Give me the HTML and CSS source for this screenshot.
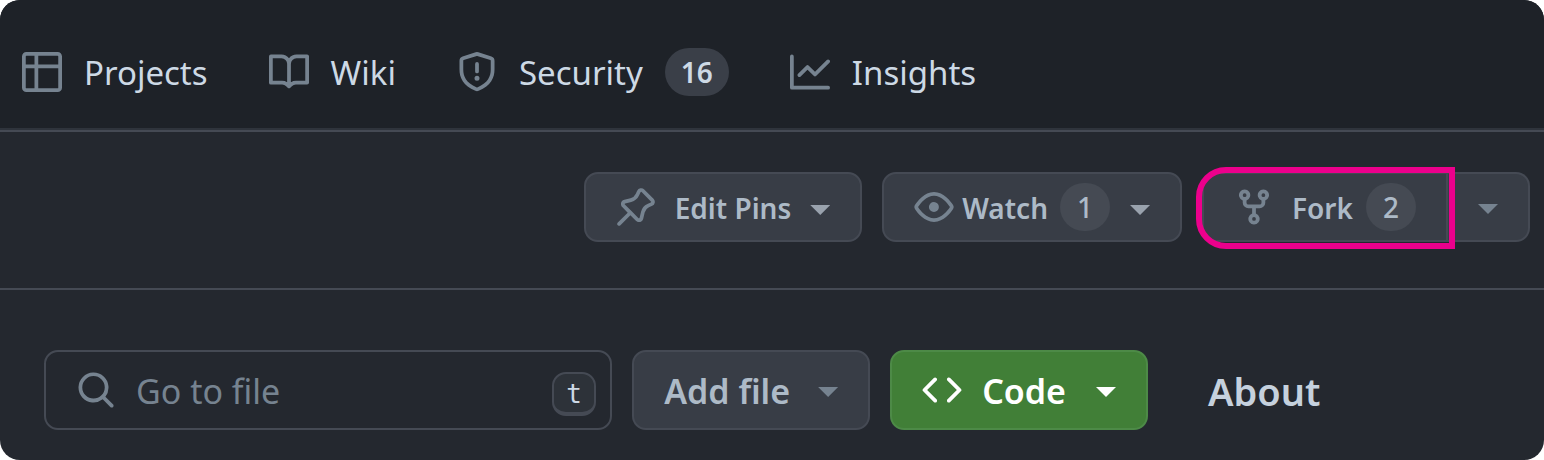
FILE: index.html
```html
<!DOCTYPE html>
<html lang="en">
<head>
<meta charset="utf-8">
<title>Repository</title>
<meta name="viewport" content="width=device-width, initial-scale=1">
<link rel="stylesheet" href="styles.css">
</head>
<body>
<div class="window">
  <nav class="tabs" aria-label="Repository">
    <a class="tab" href="#projects">
      <svg class="icon" viewBox="0 0 16 16" aria-hidden="true"><path d="M0 1.75C0 .784.784 0 1.75 0h12.5C15.216 0 16 .784 16 1.75v12.5A1.75 1.75 0 0 1 14.25 16H1.75A1.75 1.75 0 0 1 0 14.25ZM6.5 6.5v8h7.75a.25.25 0 0 0 .25-.25V6.5Zm8-1.5V1.75a.25.25 0 0 0-.25-.25H6.5V5Zm-13 1.5v7.75c0 .138.112.25.25.25H5v-8ZM5 5V1.5H1.75a.25.25 0 0 0-.25.25V5Z"/></svg>
      <span class="label">Projects</span>
    </a>
    <a class="tab" href="#wiki">
      <svg class="icon" viewBox="0 0 16 16" aria-hidden="true"><path d="M0 1.75A.75.75 0 0 1 .75 1h4.253c1.227 0 2.317.59 3 1.501A3.743 3.743 0 0 1 11.006 1h4.245a.75.75 0 0 1 .75.75v10.5a.75.75 0 0 1-.75.75h-4.507a2.25 2.25 0 0 0-1.591.659l-.622.621a.75.75 0 0 1-1.06 0l-.622-.621A2.25 2.25 0 0 0 5.258 13H.75a.75.75 0 0 1-.75-.75Zm7.251 10.324.004-5.073-.002-2.253A2.25 2.25 0 0 0 5.003 2.5H1.5v9h3.757a3.75 3.75 0 0 1 1.994.574ZM8.755 4.75l-.004 7.322a3.752 3.752 0 0 1 1.992-.572H14.5v-9h-3.495a2.25 2.25 0 0 0-2.25 2.25Z"/></svg>
      <span class="label">Wiki</span>
    </a>
    <a class="tab" href="#security">
      <svg class="icon" viewBox="0 0 16 16" aria-hidden="true"><path d="M7.467.133a1.748 1.748 0 0 1 1.066 0l5.25 1.68A1.75 1.75 0 0 1 15 3.48V7c0 1.566-.32 3.182-1.303 4.682-.983 1.498-2.585 2.813-5.032 3.855a1.697 1.697 0 0 1-1.33 0c-2.447-1.042-4.049-2.357-5.032-3.855C1.32 10.182 1 8.566 1 7V3.48a1.75 1.75 0 0 1 1.217-1.667Zm.61 1.429a.25.25 0 0 0-.153 0l-5.25 1.68a.25.25 0 0 0-.174.238V7c0 1.358.275 2.666 1.057 3.86.784 1.194 2.121 2.34 4.366 3.297a.196.196 0 0 0 .154 0c2.245-.956 3.582-2.104 4.366-3.298C13.225 9.666 13.5 8.36 13.5 7V3.48a.251.251 0 0 0-.174-.237l-5.25-1.68ZM8.75 4.75v3a.75.75 0 0 1-1.5 0v-3a.75.75 0 0 1 1.5 0ZM9 10.5a1 1 0 1 1-2 0 1 1 0 0 1 2 0Z"/></svg>
      <span class="label">Security</span>
      <span class="count">16</span>
    </a>
    <a class="tab" href="#insights">
      <svg class="icon" viewBox="0 0 16 16" aria-hidden="true"><path d="M1.5 1.75V13.5h13.75a.75.75 0 0 1 0 1.5H.75a.75.75 0 0 1-.75-.75V1.75a.75.75 0 0 1 1.5 0Zm14.28 2.53-5.25 5.25a.75.75 0 0 1-1.06 0L7 7.06 4.28 9.78a.751.751 0 0 1-1.042-.018.751.751 0 0 1-.018-1.042l3.25-3.25a.75.75 0 0 1 1.06 0L10 7.94l4.72-4.72a.751.751 0 0 1 1.042.018.751.751 0 0 1 .018 1.042Z"/></svg>
      <span class="label">Insights</span>
    </a>
  </nav>

  <div class="actions">
    <button class="btn btn-pins" type="button">
      <svg class="icon" viewBox="0 0 16 16" aria-hidden="true"><path d="m11.294.984 3.722 3.722a1.75 1.75 0 0 1-.504 2.826l-1.327.613a3.089 3.089 0 0 0-1.707 2.084l-.584 2.454c-.317 1.332-1.972 1.8-2.94.832L5.75 11.311 1.78 15.28a.749.749 0 1 1-1.06-1.06l3.969-3.97-2.204-2.204c-.968-.968-.5-2.623.832-2.94l2.454-.584a3.08 3.08 0 0 0 2.084-1.707l.613-1.327a1.75 1.75 0 0 1 2.826-.504ZM6.283 9.723l2.732 2.731a.25.25 0 0 0 .42-.119l.584-2.454a4.586 4.586 0 0 1 2.537-3.098l1.328-.613a.25.25 0 0 0 .072-.404l-3.722-3.722a.25.25 0 0 0-.404.072l-.613 1.328a4.584 4.584 0 0 1-3.098 2.537l-2.454.584a.25.25 0 0 0-.119.42l2.731 2.732Z"/></svg>
      <span class="label">Edit Pins</span>
      <span class="caret"></span>
    </button>
    <button class="btn btn-watch" type="button">
      <svg class="icon" viewBox="0 0 16 16" aria-hidden="true"><path d="M8 2c1.981 0 3.671.992 4.933 2.078 1.27 1.091 2.187 2.345 2.637 3.023a1.62 1.62 0 0 1 0 1.798c-.45.678-1.367 1.932-2.637 3.023C11.67 13.008 9.981 14 8 14c-1.981 0-3.671-.992-4.933-2.078C1.797 10.83.88 9.576.43 8.898a1.62 1.62 0 0 1 0-1.798c.45-.677 1.367-1.931 2.637-3.022C4.33 2.992 6.019 2 8 2ZM1.679 7.932a.12.12 0 0 0 0 .136c.411.622 1.241 1.75 2.366 2.717C5.176 11.758 6.527 12.5 8 12.5c1.473 0 2.825-.742 3.955-1.715 1.124-.967 1.954-2.096 2.366-2.717a.12.12 0 0 0 0-.136c-.412-.621-1.242-1.75-2.366-2.717C10.824 4.242 9.473 3.5 8 3.5c-1.473 0-2.825.742-3.955 1.715-1.124.967-1.954 2.096-2.366 2.717ZM8 10a2 2 0 1 1-.001-3.999A2 2 0 0 1 8 10Z"/></svg>
      <span class="label">Watch</span>
      <span class="count count-round">1</span>
      <span class="caret"></span>
    </button>
    <div class="split">
      <button class="btn btn-fork" type="button">
        <svg class="icon" viewBox="0 0 16 16" aria-hidden="true"><path d="M5 5.372v.878c0 .414.336.75.75.75h4.5a.75.75 0 0 0 .75-.75v-.878a2.25 2.25 0 1 1 1.5 0v.878a2.25 2.25 0 0 1-2.25 2.25h-1.5v2.128a2.251 2.251 0 1 1-1.5 0V8.5h-1.5A2.25 2.25 0 0 1 3.5 6.25v-.878a2.25 2.25 0 1 1 1.5 0ZM5 3.25a.75.75 0 1 0-1.5 0 .75.75 0 0 0 1.5 0Zm6.75.75a.75.75 0 1 0 0-1.5.75.75 0 0 0 0 1.5Zm-3 8.75a.75.75 0 1 0-1.5 0 .75.75 0 0 0 1.5 0Z"/></svg>
        <span class="label">Fork</span>
        <span class="count count-round">2</span>
      </button>
      <button class="btn btn-more" type="button" aria-label="More fork options"><span class="caret caret-muted"></span></button>
    </div>
  </div>

  <main class="content">
    <div class="search">
      <svg class="icon" viewBox="0 0 16 16" aria-hidden="true"><path d="M10.68 11.74a6 6 0 0 1-7.922-8.982 6 6 0 0 1 8.982 7.922l3.04 3.04a.749.749 0 0 1-.326 1.275.749.749 0 0 1-.734-.215ZM11.5 7a4.499 4.499 0 1 0-8.997 0A4.499 4.499 0 0 0 11.5 7Z"/></svg>
      <input class="search-input" type="text" placeholder="Go to file" aria-label="Go to file">
      <kbd class="key">t</kbd>
    </div>
    <button class="btn btn-large btn-add" type="button"><span class="label">Add file</span><span class="caret caret-muted"></span></button>
    <button class="btn btn-large btn-code" type="button">
      <svg class="icon" viewBox="0 0 16 16" aria-hidden="true"><path d="m11.28 3.22 4.25 4.25a.75.75 0 0 1 0 1.06l-4.25 4.25a.749.749 0 0 1-1.275-.326.749.749 0 0 1 .215-.734L13.94 8l-3.72-3.72a.749.749 0 0 1 .326-1.275.749.749 0 0 1 .734.215Zm-6.56 0a.751.751 0 0 1 1.042.018.751.751 0 0 1 .018 1.042L2.06 8l3.72 3.72a.749.749 0 0 1-.326 1.275.749.749 0 0 1-.734-.215L.47 8.53a.75.75 0 0 1 0-1.06Z"/></svg>
      <span class="label">Code</span>
      <span class="caret caret-muted"></span>
    </button>
    <h2 class="about">About</h2>
  </main>
</div>
</body>
</html>
```

FILE: styles.css
```css
* {
  box-sizing: border-box;
}

body {
  margin: 0;
  background: #ffffff;
  color: #cdd9e5;
  font-family: "Noto Sans", "Open Sans", sans-serif;
}

.window {
  min-height: 100vh;
  overflow: hidden;
  border-radius: 20px;
  background: #24282f;
}

.icon {
  flex: none;
  width: 40px;
  height: 40px;
  fill: #768390;
}

.label {
  padding-top: 2px;
  white-space: nowrap;
}

.tabs {
  display: flex;
  gap: 61px;
  padding: 40px 22px 26px;
  background: #1e2228;
  border-bottom: 2px solid #454a54;
  box-shadow: inset 0 -2px #2f343c;
}

.tab {
  display: flex;
  align-items: center;
  gap: 22px;
  height: 64px;
  color: #cdd9e5;
  font-size: 33px;
  line-height: 48px;
  text-decoration: none;
}

.count {
  padding: 0 16px;
  border-radius: 24px;
  background: #3a3f48;
  font-size: 28px;
  font-weight: 600;
  line-height: 48px;
  text-align: center;
}

.count-round {
  min-width: 50px;
  background: #454a53;
  font-weight: 500;
}

.actions {
  display: flex;
  justify-content: flex-end;
  gap: 20px;
  padding: 40px 14px 46px;
  border-bottom: 2px solid #454a54;
}

.btn {
  display: flex;
  align-items: center;
  height: 70px;
  padding: 0 30px;
  border: 2px solid #454a54;
  border-radius: 14px;
  background: #383d46;
  color: #adbac7;
  font-family: inherit;
  font-size: 28px;
  font-weight: 600;
  line-height: 48px;
}

.caret {
  flex: none;
  width: 20px;
  height: 10px;
  margin-top: 6px;
  background: #99a2ad;
  clip-path: polygon(0 0, 100% 0, 50% 100%);
}

.caret-muted {
  margin-top: 4px;
  background: #768390;
}

.btn-pins {
  gap: 19px;
}

.btn-watch {
  gap: 8px;
}

.btn-watch .count {
  margin-left: 4px;
}

.btn-watch .caret {
  margin-left: 12px;
}

.split {
  display: flex;
}

.btn-fork {
  position: relative;
  gap: 13px;
  border-radius: 14px 0 0 14px;
}

.btn-fork .icon {
  margin-right: 5px;
}

.btn-fork::after {
  content: "";
  position: absolute;
  inset: -7px -9px -9px -8px;
  border: 6px solid #ec008c;
  border-radius: 30px 0 0 30px;
}

.btn-more {
  border-left: 0;
  border-radius: 0 14px 14px 0;
}

.content {
  display: flex;
  gap: 20px;
  padding: 60px 44px 28px;
}

.search {
  display: flex;
  flex: 1;
  align-items: center;
  gap: 20px;
  min-width: 0;
  height: 80px;
  padding: 0 14px 0 30px;
  border: 2px solid #454a54;
  border-radius: 14px;
}

.search-input {
  flex: 1;
  min-width: 0;
  padding: 2px 0 0;
  border: 0;
  outline: 0;
  background: transparent;
  color: #cdd9e5;
  font-family: inherit;
  font-size: 34px;
  line-height: 48px;
}

.search-input::placeholder {
  color: #768390;
  opacity: 1;
}

.key {
  width: 44px;
  height: 44px;
  margin-top: 8px;
  border: 2px solid #454a54;
  border-bottom-width: 4px;
  border-radius: 14px;
  background: #2d3239;
  font-family: "DejaVu Sans Mono", "Liberation Mono", monospace;
  font-size: 26px;
  line-height: 40px;
  text-align: center;
}

.btn-large {
  height: 80px;
  font-size: 34px;
}

.btn-add {
  gap: 28px;
}

.btn-code {
  gap: 20px;
  border-color: #4d8a47;
  background: #417f37;
  color: #ffffff;
}

.btn-code .icon {
  fill: #ffffff;
}

.btn-code .caret {
  margin-left: 10px;
  background: #ffffff;
}

.about {
  width: 332px;
  margin: 0;
  padding-left: 40px;
  color: #c5d1de;
  font-size: 38px;
  font-weight: 600;
  line-height: 82px;
}
```
